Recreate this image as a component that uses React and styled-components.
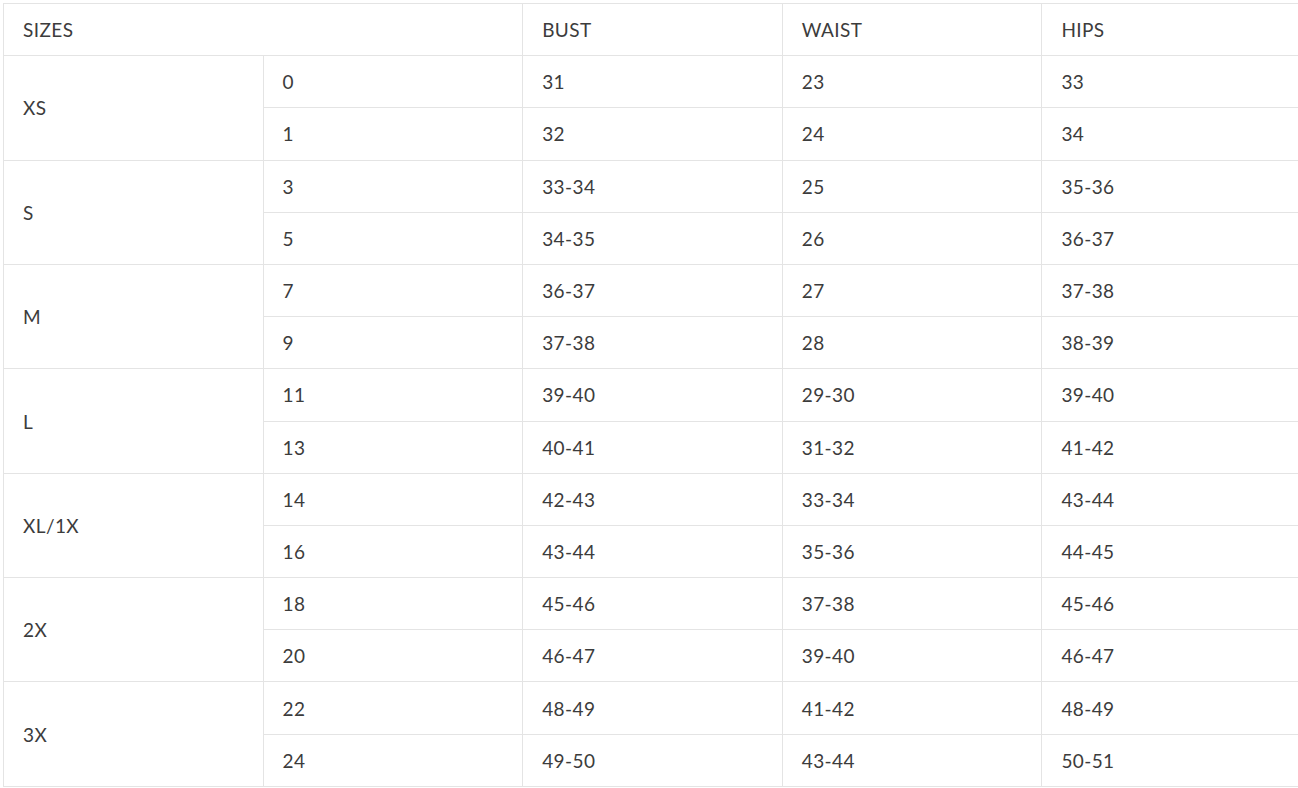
import React from "react";
import styled, { createGlobalStyle } from "styled-components";

const GlobalStyle = createGlobalStyle`
  html, body {
    margin: 0;
    padding: 0;
    background: #fff;
    overflow: hidden;
  }
  body {
    font-family: Lato, "Liberation Sans", sans-serif;
  }
`;

const sizes = [
  { label: "XS", rows: [["0", "31", "23", "33"], ["1", "32", "24", "34"]] },
  { label: "S", rows: [["3", "33-34", "25", "35-36"], ["5", "34-35", "26", "36-37"]] },
  { label: "M", rows: [["7", "36-37", "27", "37-38"], ["9", "37-38", "28", "38-39"]] },
  { label: "L", rows: [["11", "39-40", "29-30", "39-40"], ["13", "40-41", "31-32", "41-42"]] },
  { label: "XL/1X", rows: [["14", "42-43", "33-34", "43-44"], ["16", "43-44", "35-36", "44-45"]] },
  { label: "2X", rows: [["18", "45-46", "37-38", "45-46"], ["20", "46-47", "39-40", "46-47"]] },
  { label: "3X", rows: [["22", "48-49", "41-42", "48-49"], ["24", "49-50", "43-44", "50-51"]] },
];

const App = () => {
  return (
    <Wrap>
      <GlobalStyle />
      <Chart>
        <thead>
          <Row>
            <Head colSpan={2}>SIZES</Head>
            <Head>BUST</Head>
            <Head>WAIST</Head>
            <Head>HIPS</Head>
          </Row>
        </thead>
        <tbody>
          {sizes.map((group) =>
            group.rows.map((r, i) => (
              <Row key={group.label + r[0]}>
                {i === 0 && <Cell rowSpan={2}>{group.label}</Cell>}
                {r.map((v, j) => (
                  <Cell key={j}>{v}</Cell>
                ))}
              </Row>
            ))
          )}
        </tbody>
      </Chart>
    </Wrap>
  );
};

export default App;

const Wrap = styled.div`
  padding: 3px 0 0 3px;
  width: 1310px;
`;

const Chart = styled.table`
  border-collapse: collapse;
  table-layout: fixed;
  width: 1299px;
  color: #3c3c3c;
  font-size: 19px;
  letter-spacing: 0.4px;
`;

const Row = styled.tr`
  height: 52.2px;
`;

const Head = styled.th`
  border: 1px solid #e4e4e4;
  text-align: left;
  font-weight: 400;
  padding: 0 19px;
`;

const Cell = styled.td`
  border: 1px solid #e4e4e4;
  padding: 0 19px;
  vertical-align: middle;
`;
